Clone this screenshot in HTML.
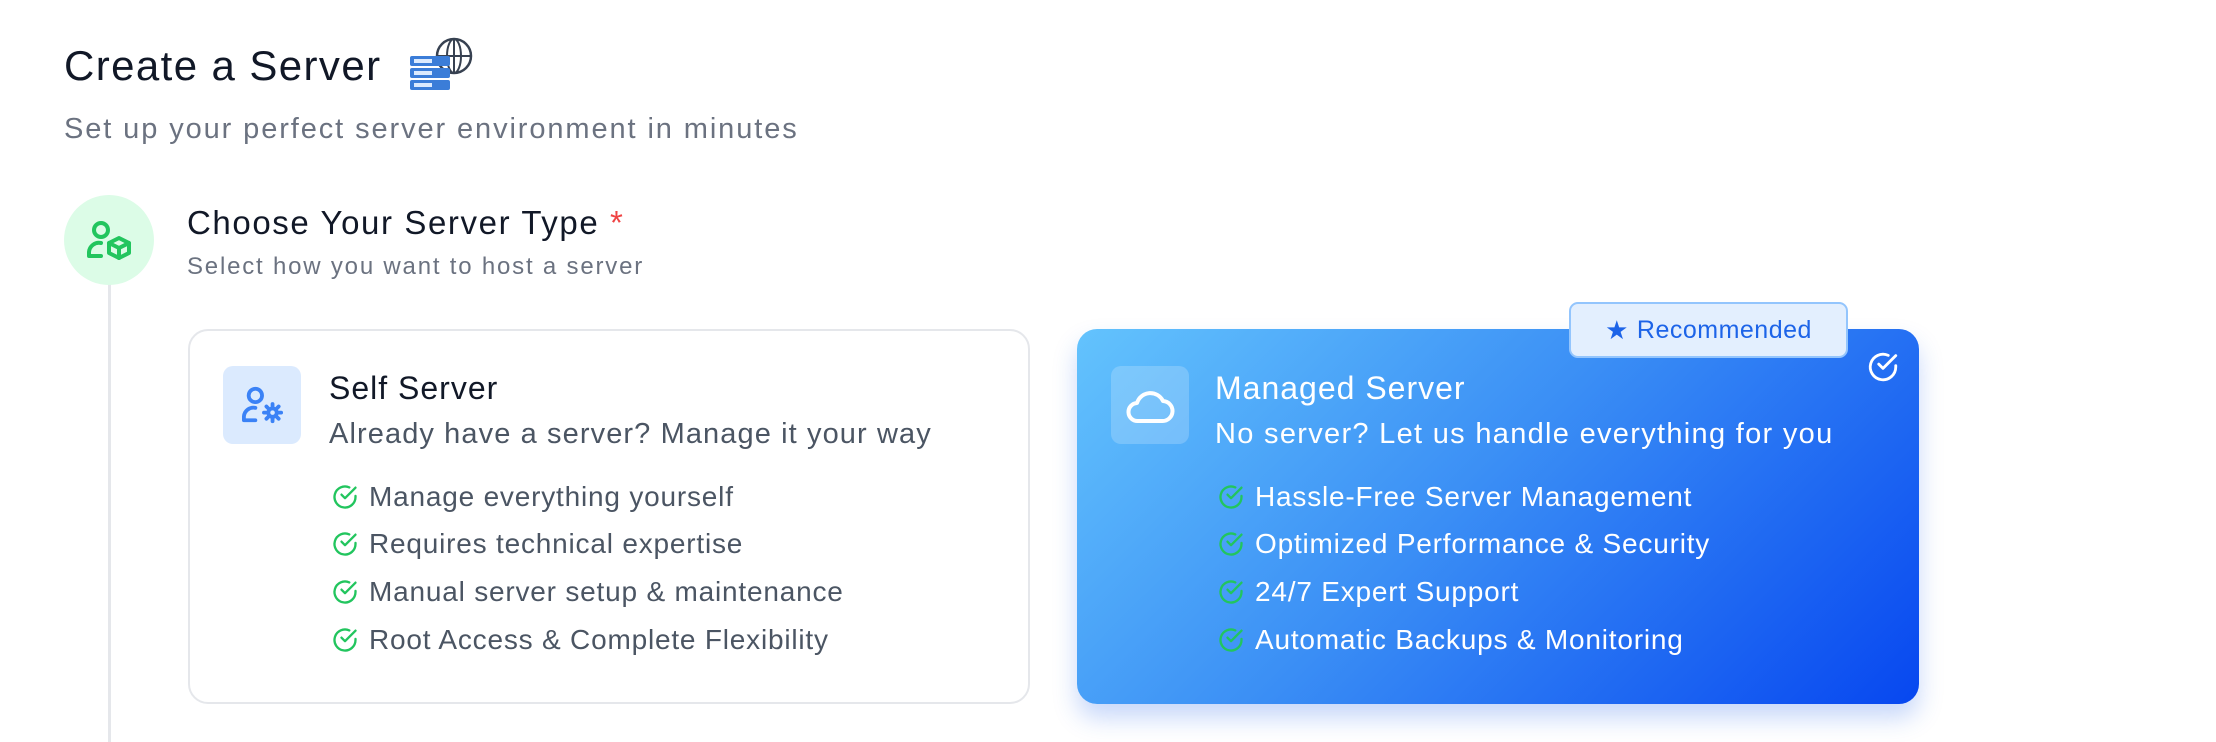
<!DOCTYPE html>
<html><head><meta charset="utf-8"><style>
*{margin:0;padding:0;box-sizing:border-box}
body{width:2216px;height:730px;background:#fff;font-family:"Liberation Sans",sans-serif;position:relative;overflow:hidden;color:#111827}
.a{position:absolute;white-space:nowrap}
.li{position:absolute;display:flex;align-items:center;font-size:28px;letter-spacing:0.8px}
.li svg{margin-right:10px}
</style></head><body>
<div class="a" style="left:64px;top:42px;font-size:42px;color:#111827;letter-spacing:1.4px">Create a Server</div>
<svg class="a" style="left:408px;top:36px" width="66" height="56" viewBox="0 0 66 56">
<circle cx="46" cy="20" r="17" fill="none" stroke="#374151" stroke-width="2.5"/>
<ellipse cx="46" cy="20" rx="7" ry="17" fill="none" stroke="#374151" stroke-width="2"/>
<line x1="29" y1="20" x2="63" y2="20" stroke="#374151" stroke-width="2"/>
<line x1="46" y1="3" x2="46" y2="37" stroke="#374151" stroke-width="2"/>
<rect x="2" y="20" width="40" height="10" rx="2" fill="#3b7dd8"/>
<rect x="2" y="32" width="40" height="10" rx="2" fill="#3b7dd8"/>
<rect x="2" y="44" width="40" height="10" rx="2" fill="#3b7dd8"/>
<rect x="6" y="23" width="18" height="4" fill="#dbeafe"/><rect x="6" y="35" width="18" height="4" fill="#dbeafe"/><rect x="6" y="47" width="18" height="4" fill="#dbeafe"/>
</svg>
<div class="a" style="left:64px;top:113px;font-size:29px;color:#6b7280;letter-spacing:1.9px">Set up your perfect server environment in minutes</div>

<div class="a" style="left:108px;top:282px;width:3px;height:460px;background:#e5e7eb"></div>
<div class="a" style="left:64px;top:195px;width:90px;height:90px;border-radius:50%;background:#dcfce7"></div>
<svg class="a" style="left:85px;top:218px" width="48" height="44" viewBox="0 0 24 22" fill="none" stroke="#22c55e" stroke-width="2" stroke-linecap="round" stroke-linejoin="round">
<circle cx="8" cy="6" r="3.5"/><path d="M2 19v-2a5 5 0 0 1 6-4.5M2 19h6"/>
<path d="M17 10l5 2.5v5L17 20l-5-2.5v-5z"/><path d="M12 12.5l5 2.5 5-2.5M17 15v5"/>
</svg>
<div class="a" style="left:187px;top:204px;font-size:33px;color:#111827;letter-spacing:1.6px">Choose Your Server Type <span style="color:#ef4444">*</span></div>
<div class="a" style="left:187px;top:253px;font-size:24px;color:#6b7280;letter-spacing:1.8px">Select how you want to host a server</div>

<div class="a" style="left:188px;top:329px;width:842px;height:375px;border:2px solid #e5e7eb;border-radius:20px;background:#fff"></div>
<div class="a" style="left:223px;top:366px;width:78px;height:78px;border-radius:10px;background:#dbeafe"></div>
<svg class="a" style="left:240px;top:384px" width="46" height="42" viewBox="0 0 24 22" fill="none" stroke="#3b82f6" stroke-width="2" stroke-linecap="round" stroke-linejoin="round">
<circle cx="8" cy="6" r="3.5"/><path d="M2 19v-2a5 5 0 0 1 6-4.5M2 19h6"/>
<circle cx="17" cy="15" r="2.2"/><path d="M17 10.5v1.5M17 18v1.5M12.5 15H14M20 15h1.5M13.8 11.8l1 1M19.2 17.2l1 1M13.8 18.2l1-1M19.2 12.8l1-1"/>
</svg>
<div class="a" style="left:329px;top:370px;font-size:32px;color:#111827;letter-spacing:1px">Self Server</div>
<div class="a" style="left:329px;top:418px;font-size:29px;color:#4b5563;letter-spacing:1.1px">Already have a server? Manage it your way</div>
<svg width="0" height="0" style="position:absolute"><defs><symbol id="ck" viewBox="0 0 24 24"><path d="M21 11.1V12a9 9 0 1 1-5.3-8.2" fill="none" stroke="#22c55e" stroke-width="2" stroke-linecap="round"/><path d="M21 4L12 13l-3-3" fill="none" stroke="#22c55e" stroke-width="2" stroke-linecap="round" stroke-linejoin="round"/></symbol></defs></svg>
<div class="li" style="left:331px;top:481px;color:#4b5563"><svg width="28" height="28"><use href="#ck"/></svg>Manage everything yourself</div>
<div class="li" style="left:331px;top:528px;color:#4b5563"><svg width="28" height="28"><use href="#ck"/></svg>Requires technical expertise</div>
<div class="li" style="left:331px;top:576px;color:#4b5563"><svg width="28" height="28"><use href="#ck"/></svg>Manual server setup &amp; maintenance</div>
<div class="li" style="left:331px;top:624px;color:#4b5563"><svg width="28" height="28"><use href="#ck"/></svg>Root Access &amp; Complete Flexibility</div>

<div class="a" style="left:1077px;top:329px;width:842px;height:375px;border-radius:20px;background:linear-gradient(135deg,#63c3fd 0%,#3b8ff5 45%,#0747f0 100%);box-shadow:0 14px 24px rgba(37,99,235,0.25)"></div>
<div class="a" style="left:1569px;top:302px;width:279px;height:56px;border-radius:9px;background:#e3effe;border:2px solid #93c5fd;display:flex;align-items:center;justify-content:center;font-size:25px;color:#1d64e8;letter-spacing:0.5px"><span style="font-size:26px;margin-right:8px">★</span>Recommended</div>
<svg class="a" style="left:1866px;top:350px" width="34" height="34" viewBox="0 0 24 24"><path d="M21 11.1V12a9 9 0 1 1-5.3-8.2" fill="none" stroke="#fff" stroke-width="2" stroke-linecap="round"/><path d="M21 4L12 13l-3-3" fill="none" stroke="#fff" stroke-width="2" stroke-linecap="round" stroke-linejoin="round"/></svg>
<div class="a" style="left:1111px;top:366px;width:78px;height:78px;border-radius:10px;background:rgba(255,255,255,0.2)"></div>
<svg class="a" style="left:1124px;top:384px" width="52" height="42" viewBox="0 0 26 20" fill="none" stroke="#fff" stroke-width="2" stroke-linejoin="round"><path d="M7 18h12a5 5 0 0 0 .5-10A7 7 0 0 0 6.5 9 4.5 4.5 0 0 0 7 18z"/></svg>
<div class="a" style="left:1215px;top:370px;font-size:32px;color:#fff;letter-spacing:1px">Managed Server</div>
<div class="a" style="left:1215px;top:418px;font-size:29px;color:#fff;letter-spacing:1.3px">No server? Let us handle everything for you</div>
<div class="li" style="left:1217px;top:481px;color:#fff"><svg width="28" height="28"><use href="#ck"/></svg>Hassle-Free Server Management</div>
<div class="li" style="left:1217px;top:528px;color:#fff"><svg width="28" height="28"><use href="#ck"/></svg>Optimized Performance &amp; Security</div>
<div class="li" style="left:1217px;top:576px;color:#fff"><svg width="28" height="28"><use href="#ck"/></svg>24/7 Expert Support</div>
<div class="li" style="left:1217px;top:624px;color:#fff"><svg width="28" height="28"><use href="#ck"/></svg>Automatic Backups &amp; Monitoring</div>
</body></html>
